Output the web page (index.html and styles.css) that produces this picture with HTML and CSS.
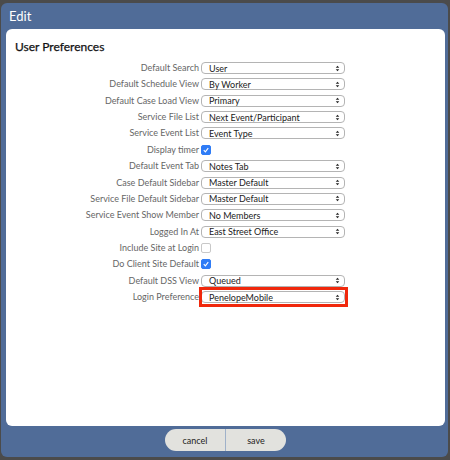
FILE: index.html
```html
<!DOCTYPE html>
<html lang="en">
<head>
  <meta charset="UTF-8">
  <meta name="viewport" content="width=device-width, initial-scale=1.0">
  <title>Edit</title>
  <link rel="stylesheet" href="styles.css">
</head>
<body>

  <div class="dialog">
    <div class="dialog-title">Edit</div>

    <div class="panel">
      <h2>User Preferences</h2>

      <div class="prefs">
        <label>Default Search</label>
        <div class="select"><span>User</span><svg viewBox="0 0 6 10"><path d="M0.5 4 L3 1 L5.5 4 Z M0.5 6 L3 9 L5.5 6 Z"/></svg></div>

        <label>Default Schedule View</label>
        <div class="select"><span>By Worker</span><svg viewBox="0 0 6 10"><path d="M0.5 4 L3 1 L5.5 4 Z M0.5 6 L3 9 L5.5 6 Z"/></svg></div>

        <label>Default Case Load View</label>
        <div class="select"><span>Primary</span><svg viewBox="0 0 6 10"><path d="M0.5 4 L3 1 L5.5 4 Z M0.5 6 L3 9 L5.5 6 Z"/></svg></div>

        <label>Service File List</label>
        <div class="select"><span>Next Event/Participant</span><svg viewBox="0 0 6 10"><path d="M0.5 4 L3 1 L5.5 4 Z M0.5 6 L3 9 L5.5 6 Z"/></svg></div>

        <label>Service Event List</label>
        <div class="select"><span>Event Type</span><svg viewBox="0 0 6 10"><path d="M0.5 4 L3 1 L5.5 4 Z M0.5 6 L3 9 L5.5 6 Z"/></svg></div>

        <label>Display timer</label>
        <div class="check on"><svg viewBox="0 0 10 10"><path d="M2.2 5.2 L4.2 7.3 L7.8 2.6"/></svg></div>

        <label>Default Event Tab</label>
        <div class="select"><span>Notes Tab</span><svg viewBox="0 0 6 10"><path d="M0.5 4 L3 1 L5.5 4 Z M0.5 6 L3 9 L5.5 6 Z"/></svg></div>

        <label>Case Default Sidebar</label>
        <div class="select"><span>Master Default</span><svg viewBox="0 0 6 10"><path d="M0.5 4 L3 1 L5.5 4 Z M0.5 6 L3 9 L5.5 6 Z"/></svg></div>

        <label>Service File Default Sidebar</label>
        <div class="select"><span>Master Default</span><svg viewBox="0 0 6 10"><path d="M0.5 4 L3 1 L5.5 4 Z M0.5 6 L3 9 L5.5 6 Z"/></svg></div>

        <label>Service Event Show Member</label>
        <div class="select"><span>No Members</span><svg viewBox="0 0 6 10"><path d="M0.5 4 L3 1 L5.5 4 Z M0.5 6 L3 9 L5.5 6 Z"/></svg></div>

        <label>Logged In At</label>
        <div class="select"><span>East Street Office</span><svg viewBox="0 0 6 10"><path d="M0.5 4 L3 1 L5.5 4 Z M0.5 6 L3 9 L5.5 6 Z"/></svg></div>

        <label>Include Site at Login</label>
        <div class="check"></div>

        <label>Do Client Site Default</label>
        <div class="check on"><svg viewBox="0 0 10 10"><path d="M2.2 5.2 L4.2 7.3 L7.8 2.6"/></svg></div>

        <label>Default DSS View</label>
        <div class="select"><span>Queued</span><svg viewBox="0 0 6 10"><path d="M0.5 4 L3 1 L5.5 4 Z M0.5 6 L3 9 L5.5 6 Z"/></svg></div>

        <label>Login Preference</label>
        <div class="select marked"><span>PenelopeMobile</span><svg viewBox="0 0 6 10"><path d="M0.5 4 L3 1 L5.5 4 Z M0.5 6 L3 9 L5.5 6 Z"/></svg></div>
      </div>
    </div>

    <div class="dialog-buttons">
      <button class="btn">cancel</button>
      <button class="btn">save</button>
    </div>
  </div>

</body>
</html>
```

FILE: styles.css
```css
body {
  margin: 0;
  background: #4b4b4b;
  font-family: Lato, "Open Sans", sans-serif;
}

.dialog {
  box-sizing: border-box;
  width: 447px;
  height: 454px;
  margin: 3px 0 0 1px;
  background: #506c98;
  border-radius: 6px;
  display: flex;
  flex-direction: column;
}

.dialog-title {
  height: 26px;
  line-height: 26px;
  padding-left: 8px;
  color: #fff;
  font-size: 13px;
}

.panel {
  height: 397px;
  margin: 0 3px 0 5px;
  padding: 0 9px;
  background: #fff;
  border-radius: 6px;
}

.panel h2 {
  margin: 0;
  padding-top: 10px;
  font-size: 12px;
  font-weight: 400;
  color: #111;
  line-height: 16px;
  -webkit-text-stroke: 0.25px #111;
}

.prefs {
  display: grid;
  grid-template-columns: 184px 144px;
  grid-auto-rows: 12px;
  column-gap: 2px;
  row-gap: 4.36px;
  margin-top: 7px;
}

.prefs label {
  text-align: right;
  font-size: 9px;
  line-height: 12px;
  color: #666;
  white-space: nowrap;
}

.select {
  position: relative;
  box-sizing: border-box;
  height: 12px;
  display: flex;
  align-items: center;
  justify-content: space-between;
  padding: 0 4px 0 7px;
  border: 1px solid #b4b4b4;
  border-radius: 4px;
  background: #fff;
  font-size: 9px;
  color: #222;
}

.select svg {
  width: 5px;
  height: 7px;
  fill: #222;
}

/* red marker drawn over the field */
.select.marked::after {
  content: "";
  position: absolute;
  top: -5px;
  bottom: -5px;
  left: -3px;
  right: -4px;
  border: 3px solid #f0280c;
}

.check {
  box-sizing: border-box;
  width: 10px;
  height: 10px;
  margin-top: 1px;
  border: 1px solid #c8c8c8;
  border-radius: 2px;
  background: #fff;
}

.check.on {
  border-color: #2f7cf6;
  background: #2f7cf6;
}

.check svg {
  display: block;
  width: 8px;
  height: 8px;
  fill: none;
  stroke: #fff;
  stroke-width: 1.4;
}

.dialog-buttons {
  display: flex;
  justify-content: center;
  margin-top: 3px;
  margin-left: 2px;
}

.btn {
  width: 61px;
  height: 22px;
  border: none;
  background: #e2e2de;
  font-family: inherit;
  font-size: 9px;
  color: #222;
  padding: 0;
}

.btn:first-child {
  border-radius: 11px 0 0 11px;
  border-right: 1px solid #9fb1c9;
}

.btn:last-child {
  width: 60px;
  border-radius: 0 11px 11px 0;
}
```
